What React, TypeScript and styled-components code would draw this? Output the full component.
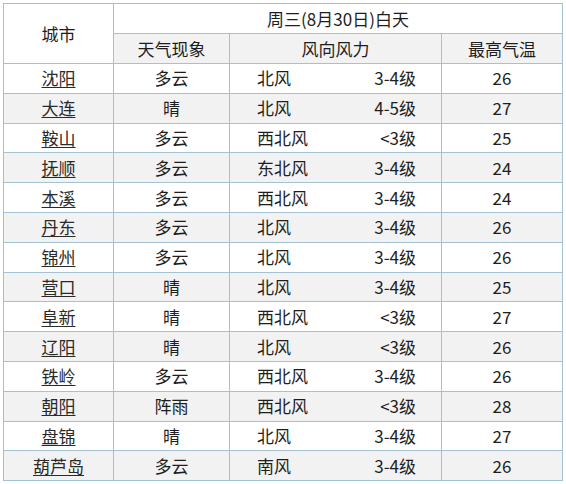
import React from "react";
import styled, { createGlobalStyle } from "styled-components";

const GlobalStyle = createGlobalStyle`
  html, body {
    margin: 0;
    padding: 0;
    background: #ffffff;
  }
  body {
    font-family: "Noto Sans CJK SC", "Liberation Sans", sans-serif;
  }
`;

const rows = [
  { city: "沈阳", weather: "多云", dir: "北风", force: "3-4级", temp: 26 },
  { city: "大连", weather: "晴", dir: "北风", force: "4-5级", temp: 27 },
  { city: "鞍山", weather: "多云", dir: "西北风", force: "<3级", temp: 25 },
  { city: "抚顺", weather: "多云", dir: "东北风", force: "3-4级", temp: 24 },
  { city: "本溪", weather: "多云", dir: "西北风", force: "3-4级", temp: 24 },
  { city: "丹东", weather: "多云", dir: "北风", force: "3-4级", temp: 26 },
  { city: "锦州", weather: "多云", dir: "北风", force: "3-4级", temp: 26 },
  { city: "营口", weather: "晴", dir: "北风", force: "3-4级", temp: 25 },
  { city: "阜新", weather: "晴", dir: "西北风", force: "<3级", temp: 27 },
  { city: "辽阳", weather: "晴", dir: "北风", force: "<3级", temp: 26 },
  { city: "铁岭", weather: "多云", dir: "西北风", force: "3-4级", temp: 26 },
  { city: "朝阳", weather: "阵雨", dir: "西北风", force: "<3级", temp: 28 },
  { city: "盘锦", weather: "晴", dir: "北风", force: "3-4级", temp: 27 },
  { city: "葫芦岛", weather: "多云", dir: "南风", force: "3-4级", temp: 26 },
];

const App = () => {
  return (
    <Page>
      <GlobalStyle />
      <Table>
        <colgroup>
          <col style={{ width: 110 }} />
          <col style={{ width: 116 }} />
          <col style={{ width: 212 }} />
          <col style={{ width: 121 }} />
        </colgroup>
        <thead>
          <HeadRow>
            <Th rowSpan={2}>城市</Th>
            <Th colSpan={3}>周三(8月30日)白天</Th>
          </HeadRow>
          <HeadRow shaded>
            <Th>天气现象</Th>
            <Th>风向风力</Th>
            <Th>最高气温</Th>
          </HeadRow>
        </thead>
        <tbody>
          {rows.map((row, index) => (
            <Row key={row.city} shaded={index % 2 === 1}>
              <Td>
                <CityLink href="#">{row.city}</CityLink>
              </Td>
              <Td>{row.weather}</Td>
              <Td>
                <Wind>
                  <span>{row.dir}</span>
                  <span>{row.force}</span>
                </Wind>
              </Td>
              <Td>{row.temp}</Td>
            </Row>
          ))}
        </tbody>
      </Table>
    </Page>
  );
};

const Page = styled.div`
  padding: 3px 0 0 3px;
`;

const Table = styled.table`
  border-collapse: collapse;
  table-layout: fixed;
  width: 560px;
  color: #1e1e1e;
  font-size: 17px;
`;

const HeadRow = styled.tr<{ shaded?: boolean }>`
  height: 30px;
  background: ${(props) => (props.shaded ? "#f2f2f2" : "#ffffff")};
`;

const Row = styled.tr<{ shaded?: boolean }>`
  height: 29.8px;
  background: ${(props) => (props.shaded ? "#f2f2f2" : "#ffffff")};
`;

const Th = styled.th`
  border: 1px solid #a3c2d3;
  font-weight: normal;
  text-align: center;
  padding: 0;
  line-height: 28px;
  background-clip: padding-box;

  &[rowspan] {
    background: #ffffff;
  }
`;

const Td = styled.td`
  border: 1px solid #a3c2d3;
  text-align: center;
  padding: 0;
  line-height: 28px;
`;

const CityLink = styled.a`
  color: #2a2a2a;
  text-decoration: underline;
  text-underline-offset: 2px;
  text-decoration-thickness: 1px;
`;

const Wind = styled.div`
  display: flex;
  justify-content: space-between;
  padding: 0 25px 0 27px;
`;

export default App;
